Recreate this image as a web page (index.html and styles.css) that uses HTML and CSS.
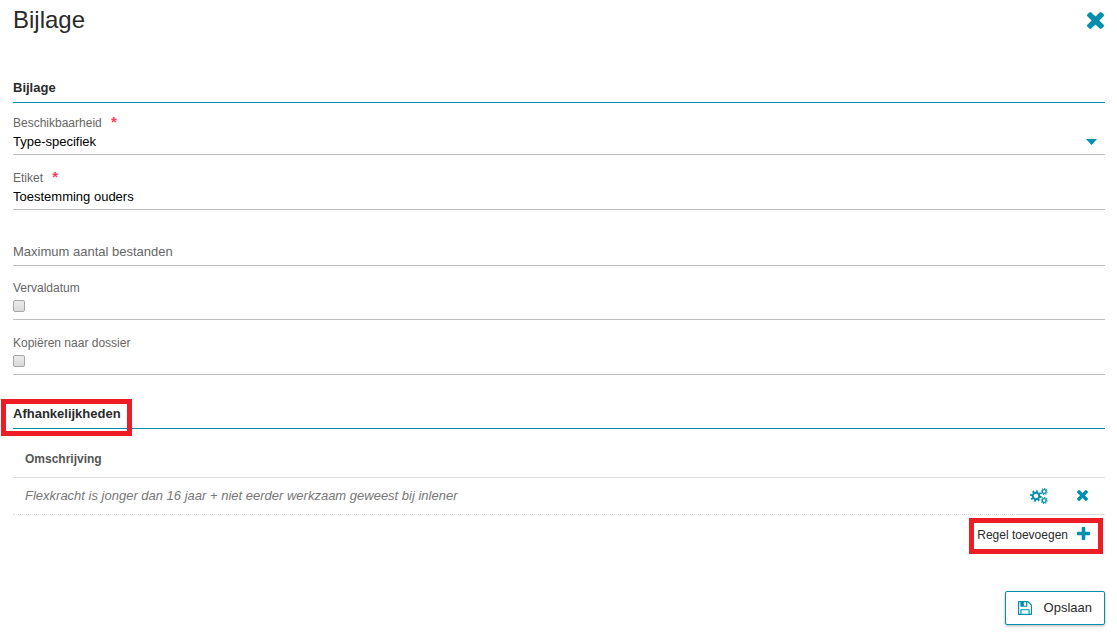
FILE: index.html
```html
<!DOCTYPE html>
<html lang="nl">
  <head>
    <meta charset="UTF-8" />
    <meta name="viewport" content="width=device-width, initial-scale=1.0" />
    <title>Bijlage</title>
    <link rel="stylesheet" href="styles.css">
  </head>
  <body>
    <header class="dialog-header">
      <h1>Bijlage</h1>
      <button type="button" class="icon-button" aria-label="Sluiten">
        <svg class="icon-close" viewBox="302 366 1188 1188"><path d="M1490 1322q0 40-28 68l-136 136q-28 28-68 28t-68-28l-294-294-294 294q-28 28-68 28t-68-28l-136-136q-28-28-28-68t28-68l294-294-294-294q-28-28-28-68t28-68l136-136q28-28 68-28t68 28l294 294 294-294q28-28 68-28t68 28l136 136q28 28 28 68t-28 68l-294 294 294 294q28 28 28 68z" /></svg>
      </button>
    </header>

    <form>
      <h2><span>Bijlage</span></h2>

      <div class="field">
        <label for="beschikbaarheid">Beschikbaarheid <span class="required">*</span></label>
        <div class="select-row">
          <select id="beschikbaarheid">
            <option>Type-specifiek</option>
          </select>
          <svg class="caret" viewBox="0 0 11 6"><path d="M0 0h11L5.500 6z" /></svg>
        </div>
      </div>

      <div class="field">
        <label for="etiket">Etiket <span class="required">*</span></label>
        <input type="text" id="etiket" value="Toestemming ouders" />
      </div>

      <div class="field field-empty">
        <input type="text" id="maximum" placeholder="Maximum aantal bestanden" aria-label="Maximum aantal bestanden" />
      </div>

      <div class="field">
        <label for="vervaldatum">Vervaldatum</label>
        <input type="checkbox" id="vervaldatum" />
      </div>

      <div class="field">
        <label for="kopieren">Kopiëren naar dossier</label>
        <input type="checkbox" id="kopieren" />
      </div>

      <h2 class="dependencies"><span class="marked">Afhankelijkheden</span></h2>

      <table>
        <thead>
          <tr>
            <th>Omschrijving</th>
            <th class="actions"></th>
          </tr>
        </thead>
        <tbody>
          <tr>
            <td class="description">Flexkracht is jonger dan 16 jaar + niet eerder werkzaam geweest bij inlener</td>
            <td class="actions">
              <div class="action-buttons">
                <button type="button" class="icon-button" aria-label="Instellingen">
                  <svg class="icon-cogs" viewBox="0 0 18 16">
                    <circle class="cog" cx="6" cy="8" r="3.300" />
                    <circle class="teeth" cx="6" cy="8" r="4.800" pathLength="16" />
                    <circle class="cog small" cx="14.200" cy="3.500" r="1.900" />
                    <circle class="teeth small" cx="14.200" cy="3.500" r="2.900" pathLength="16" />
                    <circle class="cog small" cx="14.200" cy="12.500" r="1.900" />
                    <circle class="teeth small" cx="14.200" cy="12.500" r="2.900" pathLength="16" />
                  </svg>
                </button>
                <button type="button" class="icon-button" aria-label="Verwijderen">
                  <svg class="icon-remove" viewBox="302 366 1188 1188"><path d="M1490 1322q0 40-28 68l-136 136q-28 28-68 28t-68-28l-294-294-294 294q-28 28-68 28t-68-28l-136-136q-28-28-28-68t28-68l294-294-294-294q-28-28-28-68t28-68l136-136q28-28 68-28t68 28l294 294 294-294q28-28 68-28t68 28l136 136q28 28 28 68t-28 68l-294 294 294 294q28 28 28 68z" /></svg>
                </button>
              </div>
            </td>
          </tr>
        </tbody>
      </table>

      <div class="add-row">
        <button type="button" class="add-button">
          Regel toevoegen
          <svg class="icon-plus" viewBox="192 128 1408 1408"><path d="M1600 736v192q0 40-28 68t-68 28h-416v416q0 40-28 68t-68 28h-192q-40 0-68-28t-28-68v-416h-416q-40 0-68-28t-28-68v-192q0-40 28-68t68-28h416v-416q0-40 28-68t68-28h192q40 0 68 28t28 68v416h416q40 0 68 28t28 68z" /></svg>
        </button>
      </div>

      <div class="form-footer">
        <button type="submit" class="save-button">
          <svg class="icon-save" viewBox="128 128 1536 1536"><path d="M512 1536h768v-384h-768v384zm896 0h128v-896q0-14-10-38.500t-20-34.500l-281-281q-10-10-34-20t-39-10v416q0 40-28 68t-68 28h-576q-40 0-68-28t-28-68v-416h-128v1280h128v-416q0-40 28-68t68-28h832q40 0 68 28t28 68v416zm-384-928v-320q0-13-9.500-22.500t-22.500-9.500h-192q-13 0-22.500 9.500t-9.500 22.500v320q0 13 9.500 22.500t22.500 9.500h192q13 0 22.500-9.500t9.500-22.500zm640 32v928q0 40-28 68t-68 28h-1344q-40 0-68-28t-28-68v-1344q0-40 28-68t68-28h928q40 0 88 20t76 48l280 280q28 28 48 76t20 88z" /></svg>
          Opslaan
        </button>
      </div>
    </form>
  </body>
</html>
```
FILE: styles.css
```css
* {
  margin: 0;
  padding: 0;
  box-sizing: border-box;
}
body {
  font-family: "Liberation Sans", Arial, sans-serif;
  font-size: 13px;
  line-height: 16px;
  color: #2a2a2a;
  background-color: #fff;
  padding: 0 12px 8px 13px;
}
button,
input,
select {
  font: inherit;
  color: inherit;
}
button {
  background: none;
  border: none;
  cursor: pointer;
}
svg {
  display: block;
  fill: #008fac;
}
.dialog-header {
  display: flex;
  justify-content: space-between;
  align-items: center;
  height: 40px;
  padding-right: 1px;
}
h1 {
  font-size: 24px;
  font-weight: 400;
  line-height: 28px;
}
.icon-close {
  width: 17px;
  height: 17px;
}
h2 {
  margin-top: 40px;
  padding-bottom: 6px;
  border-bottom: 1px solid #008fac;
  font-size: 13px;
  line-height: 16px;
}
.field {
  display: flex;
  flex-direction: column;
  height: 55px;
  padding-top: 15px;
  border-bottom: 1px solid #bdbdbd;
}
h2 + .field {
  height: 52px;
  padding-top: 12px;
}
.field label {
  font-size: 12px;
  color: #666;
}
.required {
  margin-left: 6px;
  font-size: 15px;
  font-weight: 700;
  line-height: 12px;
  color: #ff3d63;
}
.select-row {
  display: flex;
  align-items: center;
  margin-top: 1px;
}
select,
input[type="text"] {
  flex: 1;
  width: 100%;
  height: 20px;
  appearance: none;
  border: none;
  outline: none;
  background: none;
  color: #000;
}
input[type="text"] {
  flex: none;
}
input::placeholder {
  color: #666;
  opacity: 1;
}
.caret {
  width: 11px;
  height: 6px;
  margin-right: 8px;
}
.field-empty {
  height: 56px;
  padding-top: 31px;
}
.field-empty + .field {
  height: 54px;
  padding-top: 14px;
}
input[type="checkbox"] {
  width: 12px;
  height: 12px;
  margin-top: 4px;
  appearance: none;
  border: 1px solid #a6a6a6;
  border-radius: 2px;
  background: linear-gradient(#ececec, #d9d9d9);
}
.dependencies {
  margin-top: 31px;
}
.marked,
.add-button {
  position: relative;
}
/* red highlight frames */
.marked::after,
.add-button::after {
  content: "";
  position: absolute;
  inset: -7px -11px -15px -12px;
  border: 5px solid #ee1c25;
  pointer-events: none;
}
.add-button::after {
  inset: -8px -13px -8px -8px;
}
table {
  width: 100%;
  border-collapse: collapse;
}
th {
  height: 48px;
  padding: 12px 12px 0;
  border-bottom: 1px solid #ddd;
  font-size: 12px;
  text-align: left;
  color: #555;
}
td {
  height: 37px;
  border-bottom: 1px solid #ddd;
}
.description {
  padding-left: 12px;
  border-bottom-style: dotted;
  font-style: italic;
  color: #777;
}
.actions {
  width: 88px;
  padding: 0;
}
.action-buttons {
  display: flex;
  align-items: center;
  justify-content: space-between;
  padding: 0 17px 0 13px;
}
.icon-cogs {
  width: 18px;
  height: 16px;
}
.cog,
.teeth {
  fill: none;
  stroke: #008fac;
  stroke-width: 2;
}
.teeth {
  stroke-dasharray: 1;
}
.small {
  stroke-width: 1.2;
}
.icon-remove {
  width: 11px;
  height: 11px;
}
.add-row {
  display: flex;
  justify-content: flex-end;
  padding: 11px 15px 0 0;
}
.add-button {
  display: flex;
  align-items: flex-start;
  gap: 9px;
  height: 20px;
  padding-top: 1px;
  font-size: 12px;
}
.icon-plus {
  width: 13px;
  height: 13px;
}
.form-footer {
  display: flex;
  justify-content: flex-end;
  margin-top: 45px;
}
.save-button {
  display: flex;
  align-items: center;
  gap: 12px;
  height: 34px;
  padding: 0 12px;
  border: 1px solid #008fac;
  border-radius: 2px;
  box-shadow: 0 1px 3px rgba(0, 0, 0, 0.3);
}
.icon-save {
  width: 14px;
  height: 14px;
}
```
